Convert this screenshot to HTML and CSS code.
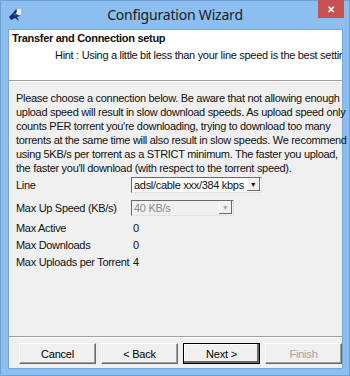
FILE: index.html
```
<!DOCTYPE html>
<html lang="en">
<head>
    <meta charset="UTF-8">
    <meta name="viewport" content="width=device-width, initial-scale=1.0">
    <title>Configuration Wizard</title>
    <link rel="stylesheet" href="styles.css">
</head>
<body>
    <div class="window">
        <div class="titlebar">
            <svg class="app-icon" width="12" height="12" viewBox="0 0 12 12">
                <rect x="6" y="0" width="6" height="6" fill="#e8eef8"/>
                <path d="M0 8 L4 4 L7 0 L8 1 L7 5 L11 7 L8 8 L10 12 L6 9 L2 11 Z" fill="#1a2a7c"/>
                <path d="M5 5 L7 4 L6 7 Z" fill="#6f86c8"/>
            </svg>
            <span class="title">Configuration Wizard</span>
            <div class="close">&#x2715;</div>
        </div>
        <div class="client">
            <div class="header">
                <div class="header-title">Transfer and Connection setup</div>
                <div class="hint">Hint : Using a little bit less than your line speed is the best setting</div>
            </div>
            <div class="main">
                <p class="intro">Please choose a connection below. Be aware that not allowing enough<br>
                upload speed will result in slow download speeds. As upload speed only<br>
                counts PER torrent you're downloading, trying to download too many<br>
                torrents at the same time will also result in slow speeds. We recommend<br>
                using 5KB/s per torrent as a STRICT minimum. The faster you upload,<br>
                the faster you'll download (with respect to the torrent speed).</p>
                <div class="form">
                    <div class="row">
                        <span class="label">Line</span>
                        <div class="combo combo-line">
                            <span class="combo-text">adsl/cable xxx/384 kbps</span>
                            <span class="combo-btn">&#9660;</span>
                        </div>
                    </div>
                    <div class="row">
                        <span class="label">Max Up Speed (KB/s)</span>
                        <div class="combo combo-speed disabled">
                            <span class="combo-text">40 KB/s</span>
                            <span class="combo-btn">&#9660;</span>
                        </div>
                    </div>
                    <div class="row row-text">
                        <span class="label">Max Active</span>
                        <span class="value">0</span>
                    </div>
                    <div class="row row-text">
                        <span class="label">Max Downloads</span>
                        <span class="value">0</span>
                    </div>
                    <div class="row row-text">
                        <span class="label">Max Uploads per Torrent</span>
                        <span class="value">4</span>
                    </div>
                </div>
            </div>
            <div class="buttons">
                <button class="btn">Cancel</button>
                <button class="btn">&lt; Back</button>
                <button class="btn default">Next &gt;</button>
                <button class="btn" disabled>Finish</button>
            </div>
        </div>
    </div>
</body>
</html>
```
FILE: styles.css
```
body {
    margin: 0;
    font-family: "Liberation Sans", Arial, sans-serif;
}

.window {
    width: 350px;
    height: 376px;
    background-color: #8cbff0;
    display: flex;
    flex-direction: column;
    box-sizing: border-box;
    border: 1px solid #6d9fd3;
}

.titlebar {
    height: 28px;
    display: flex;
    align-items: center;
    position: relative;
}
.app-icon {
    margin-left: 8px;
    margin-top: -1px;
}
.title {
    flex: 1;
    text-align: center;
    font-family: "Noto Sans", sans-serif;
    font-size: 14px;
    letter-spacing: -0.2px;
    color: #1a1a1a;
    margin-right: 20px;
    margin-top: -1px;
}
.close {
    position: absolute;
    top: -1px;
    right: 5px;
    width: 26px;
    height: 18px;
    background-color: #c75050;
    color: #ffffff;
    font-size: 10px;
    font-weight: bold;
    display: flex;
    align-items: center;
    justify-content: center;
}

.client {
    flex: 1;
    margin: 0 6px 6px 7px;
    background-color: #f0f0f0;
    display: flex;
    flex-direction: column;
    border: 1px solid #7aa7d6;
    font-size: 11px;
    letter-spacing: -0.3px;
    color: #101010;
}

.header {
    background-color: #ffffff;
    height: 51px;
    border-bottom: 1px solid #a0a0a0;
    box-shadow: 0 1px 0 #ffffff;
    padding: 1px 0 0 3px;
    box-sizing: border-box;
    overflow: hidden;
    white-space: nowrap;
}
.header-title {
    font-weight: bold;
    line-height: 14px;
}
.hint {
    padding-left: 43px;
    line-height: 14px;
    margin-top: 3px;
}

.main {
    flex: 1;
    padding: 10px 6px 0 7px;
}
.intro {
    margin: 0;
    line-height: 14px;
    white-space: nowrap;
}
.form {
    margin-top: -2px;
}
.row {
    display: flex;
    align-items: center;
    height: 23px;
    white-space: nowrap;
}
.row-text {
    height: 17px;
}
.label {
    width: 115px;
    flex-shrink: 0;
}
.value {
    padding-left: 2px;
}

.combo {
    height: 16px;
    box-sizing: border-box;
    display: flex;
    align-items: center;
    background-color: #ffffff;
    border-top: 1px solid #696969;
    border-left: 1px solid #696969;
    border-bottom: 1px solid #e3e3e3;
    border-right: 1px solid #e3e3e3;
}
.combo-line {
    width: 131px;
}
.combo-speed {
    width: 103px;
}
.combo-text {
    flex: 1;
    padding-left: 2px;
    white-space: nowrap;
}
.combo-btn {
    width: 12px;
    height: 12px;
    margin-right: 1px;
    font-size: 7px;
    display: flex;
    align-items: center;
    justify-content: center;
    background-color: #f0f0f0;
    border-right: 1px solid #696969;
    border-bottom: 1px solid #696969;
    box-shadow: inset 1px 1px #ffffff;
}
.combo.disabled {
    background-color: #f0f0f0;
    color: #8a8a8a;
}
.combo.disabled .combo-btn {
    color: #a8a8a8;
}

.buttons {
    height: 32px;
    border-top: 1px solid #a0a0a0;
    box-shadow: inset 0 1px 0 #ffffff;
    display: flex;
    gap: 5px;
    padding: 6px 0 0 10px;
    box-sizing: border-box;
}
.btn {
    width: 77px;
    height: 21px;
    font-family: "Liberation Sans", Arial, sans-serif;
    font-size: 11px;
    letter-spacing: -0.2px;
    color: #000000;
    background-color: #f0f0f0;
    border-top: 1px solid #ffffff;
    border-left: 1px solid #ffffff;
    border-right: 1px solid #696969;
    border-bottom: 1px solid #696969;
    box-shadow: inset -1px -1px #a0a0a0;
    padding: 0;
}
.btn.default {
    outline: 1px solid #000000;
    outline-offset: -1px;
    box-shadow: inset -2px -2px #696969, inset 1px 1px #ffffff;
}
.btn:disabled {
    color: #a0a0a0;
}
```
